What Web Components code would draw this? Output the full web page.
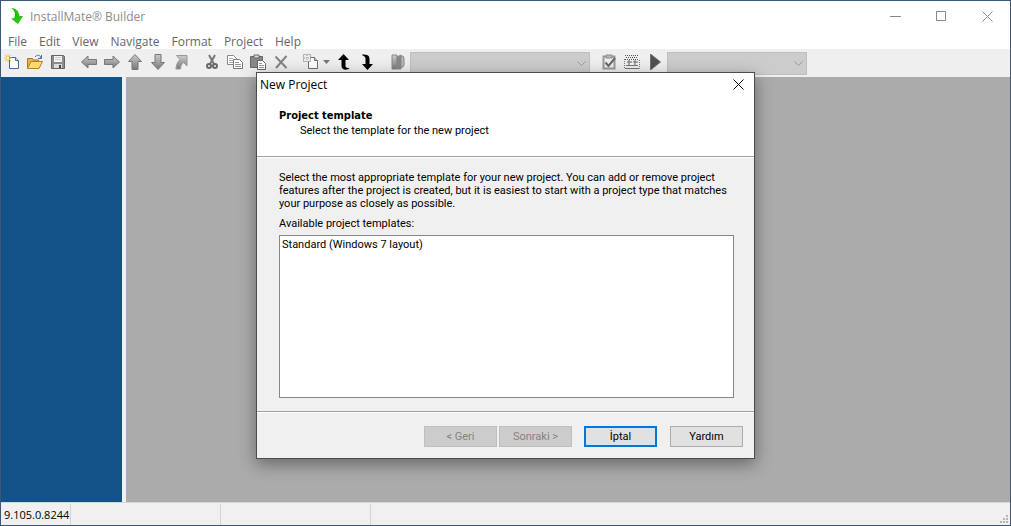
<!DOCTYPE html>
<html lang="en">
<head>
<meta charset="utf-8">
<title>InstallMate Builder</title>
<style>
    html, body { height: 100%; margin: 0; }
    body {
        font-family: "Open Sans", "Noto Sans", sans-serif;
        font-size: 12px;
        color: #000;
        overflow: hidden;
    }
</style>
</head>
<body>
<app-window>
    <title-bar slot="title">InstallMate® Builder</title-bar>
    <menu-bar slot="menu" items="File,Edit,View,Navigate,Format,Project,Help"></menu-bar>
    <tool-bar slot="tools"></tool-bar>
    <wizard-dialog slot="dialog" caption="New Project">
        <span slot="heading">Project template</span>
        <span slot="sub">Select the template for the new project</span>
        <span slot="intro">Select the most appropriate template for your new project. You can add or remove project<br>features after the project is created, but it is easiest to start with a project type that matches<br>your purpose as closely as possible.</span>
    </wizard-dialog>
    <status-bar slot="status">9.105.0.8244</status-bar>
</app-window>

<script>
class AppWindow extends HTMLElement {
    constructor() {
        super();
        this.attachShadow({ mode: 'open' });
    }

    connectedCallback() {
        this.shadowRoot.innerHTML = `
            <style>
                :host {
                    display: flex;
                    flex-direction: column;
                    position: relative;
                    box-sizing: border-box;
                    height: 100%;
                    border: 1px solid #3a5878;
                    background: #fff;
                }
                .workspace { flex: 1; display: flex; background: #ababab; }
                .side {
                    width: 121px;
                    background: #125286;
                    border-right: 4px solid #f0f0f0;
                }
                /* the modal layer lies over the whole window */
                .modal {
                    position: absolute;
                    inset: 0;
                    display: grid;
                    place-items: center;
                    padding-top: 4px;
                    box-sizing: border-box;
                }
            </style>
            <slot name="title"></slot>
            <slot name="menu"></slot>
            <slot name="tools"></slot>
            <main class="workspace"><aside class="side"></aside></main>
            <slot name="status"></slot>
            <div class="modal"><slot name="dialog"></slot></div>
        `;
    }
}

class TitleBar extends HTMLElement {
    constructor() {
        super();
        this.attachShadow({ mode: 'open' });
    }

    connectedCallback() {
        this.shadowRoot.innerHTML = `
            <style>
                :host { display: flex; height: 30px; color: #8c8c8c; align-items: center; }
                .logo { width: 16px; height: 16px; margin: 0 6px 0 7px; }
                .name { flex: 1; }
                button {
                    width: 46px;
                    height: 28px;
                    padding: 0;
                    border: 0;
                    background: none;
                    display: grid;
                    place-items: center;
                }
                svg { display: block; }
            </style>
            <svg class="logo" viewBox="0 0 16 16">
                <path d="M3 0c5 0 8 3 8.500 8H15l-5 8-7-5.500 3.500-.5C8 6 7 2 3 0z" fill="#2bc312"/>
                <path d="M3 0c4 1 6 4 5.500 9.500L6.500 10C8 6 7 2 3 0z" fill="#1fae0c"/>
            </svg>
            <span class="name"><slot></slot></span>
            <button aria-label="Minimize"><svg width="11" height="11"><path d="M0 5.500h11" stroke="#888"/></svg></button>
            <button aria-label="Maximize"><svg width="11" height="11"><path d="M.5.5h9v9h-9z" fill="none" stroke="#888"/></svg></button>
            <button aria-label="Close"><svg width="11" height="11"><path d="M.5.5l10 10M10.500.5l-10 10" stroke="#888"/></svg></button>
        `;
    }
}

class MenuBar extends HTMLElement {
    constructor() {
        super();
        this.attachShadow({ mode: 'open' });
    }

    connectedCallback() {
        const items = this.getAttribute('items').split(',');
        this.shadowRoot.innerHTML = `
            <style>
                :host { display: flex; height: 16px; padding: 2px 0 0 7px; gap: 12px; align-items: center; }
                button {
                    padding: 0;
                    border: 0;
                    background: none;
                    font: inherit;
                    color: #666;
                }
            </style>
            ${items.map((item) => `<button>${item}</button>`).join('')}
        `;
    }
}

const icons = {
    'New': '<path d="M5.500 3.500h6l3 3v8h-9z" fill="#fff" stroke="#456a9c"/><path d="M11.500 3.500v3h3" fill="#cfdcf0" stroke="#456a9c"/><path d="M4 0v8M0 4h8M1 1l6 6M7 1L1 7" stroke="#f0bd36"/><path d="M3 3h2v2H3z" fill="#fff6b8"/>',
    'Open': '<path d="M.5 14V4.500h5l1 1.500h5v2" fill="#e9b449" stroke="#a8781e"/><path d="M.5 14.500L4 7.500h11.500l-3.500 7z" fill="#ffd878" stroke="#b5811f"/><path d="M8 3c2-2.500 5-2.500 6 1M14.500 1v3.500H11" fill="none" stroke="#47699b"/>',
    'Save': '<path d="M1.500 1.500h12l1 1v12h-13z" fill="#8c8c8c" stroke="#666"/><path d="M4 2h8v6H4z" fill="#f4f4f4"/><path d="M5 3.500h6M5 5.500h6" stroke="#ccc"/><path d="M4 10h8v4H4z" fill="#ddd"/><path d="M9 11h2v3H9z" fill="#444"/>',
    'Back': '<path d="M.5 8L7 2v3.500h8.500v5H7V14z" fill="url(#g)" stroke="#777"/>',
    'Forward': '<path d="M15.500 8L9 2v3.500H.5v5H9V14z" fill="url(#g)" stroke="#777"/>',
    'Up': '<path d="M8 .5L14.500 7.500H11v8H5v-8H1.500z" fill="url(#g)" stroke="#777"/>',
    'Down': '<path d="M8 15.500L1.500 8.500H5v-8h6v8h3.500z" fill="url(#g)" stroke="#777"/>',
    'Go to': '<path d="M3.500 1.500h10.500V12l-3.500-3.500c-2 2-3 3.500-3 6.500H3c0-4 1.500-7 4-9.500z" fill="url(#g)" stroke="#999"/>',
    'Cut': '<path d="M5 1l5 9M11 1L6 10" stroke="#777" stroke-width="2"/><circle cx="5" cy="12" r="2" fill="none" stroke="#666" stroke-width="2"/><circle cx="11" cy="12" r="2" fill="none" stroke="#666" stroke-width="2"/>',
    'Copy': '<path d="M.5 1.500h6l3 3v6h-9z" fill="#fff" stroke="#888"/><path d="M2 4.500h4M2 6.500h5M2 8.500h4" stroke="#aaa"/><path d="M6.500 5.500h6l3 3v6h-9z" fill="#fff" stroke="#777"/><path d="M8 8.500h4M8 10.500h6M8 12.500h6" stroke="#999"/>',
    'Paste': '<path d="M.5 2.500h12v11H.5z" fill="#888" stroke="#666"/><path d="M4 1h5v3H4z" fill="#ddd" stroke="#666"/><path d="M7.500 6.500h5l3 3v6h-8z" fill="#fff" stroke="#666"/><path d="M9 9.500h3M9 11.500h5M9 13.500h5" stroke="#999"/>',
    'Delete': '<path d="M2.500 2.500l11 11.500M13.500 2L3 14" stroke="#858585" stroke-width="2"/>',
    'Insert': '<path d="M5.500 3.500h6l3 3v8h-9z" fill="#fff" stroke="#707070"/><path d="M11.500 3.500v3h3" fill="#ccc" stroke="#707070"/><path d="M.5.500h7v7h-7z" fill="#eee" stroke="#777" stroke-dasharray="1 1"/><path d="M4 1v6M1 4h6" stroke="#999" stroke-dasharray="1 1"/>',
    'Move up': '<path d="M7.500 0L13 6H9.500v6c0 1.500 1 2 4 2-1 2-8 3-8-2V6H2z" fill="#000"/>',
    'Move down': '<path d="M8.500 16L14 10h-3.500V5c0-4-3-4.500-7.500-4.500C3 2 6.500 1.500 6.500 5v5H3z" fill="#000"/>',
    'Exit': '<path d="M2 1h5v14H2z" fill="url(#g)" stroke="#888"/><path d="M7 3l4-2v14H7z" fill="#888" stroke="#888"/><path d="M11 2h2l1 2v7l-1 2h-2z" fill="#bbb" stroke="#888"/>',
    'Check': '<path d="M2.500 2.500h11v12h-11z" fill="#eee" stroke="#999" stroke-width="2"/><path d="M5 1h6v3H5z" fill="#bbb" stroke="#888"/><path d="M4.500 8.500l3 3.500 6.500-8" fill="none" stroke="#666" stroke-width="2"/>',
    'Build': '<path d="M1 1.500h14M2 3.500h12M1 5.500h14" stroke="#555" stroke-dasharray="1 1"/><path d="M.5 5v9.500h15V5" fill="none" stroke="#777" stroke-dasharray="1 1"/><path d="M5 6v5M3 8h5M11 6v5M9 8h5" stroke="#666"/><path d="M2 11.500h12M1 14.500h14" stroke="#777"/>',
    'Run': '<path d="M3.500 0v16l10-8z" fill="#505050" stroke="#707070"/>',
};

class ToolBar extends HTMLElement {
    constructor() {
        super();
        this.attachShadow({ mode: 'open' });
    }

    group(...names) {
        const buttons = names.map((name) => `<button aria-label="${name}">${this.icon(name)}</button>`);
        return `<div class="group">${buttons.join('')}</div>`;
    }

    icon(name) {
        return `
            <svg width="16" height="16" viewBox="0 0 16 16">
                <defs><linearGradient id="g" x2="0" y2="1"><stop stop-color="#ccc"/><stop offset="1" stop-color="#787878"/></linearGradient></defs>
                ${icons[name]}
            </svg>`;
    }

    connectedCallback() {
        this.shadowRoot.innerHTML = `
            <style>
                :host {
                    display: flex;
                    height: 28px;
                    gap: 8px;
                    align-items: flex-start;
                    background: #efefef;
                }
                .group { display: flex; }
                button {
                    box-sizing: border-box;
                    width: 23px;
                    height: 26px;
                    padding: 0 2px 0 0;
                    border: 0;
                    background: none;
                    display: flex;
                    justify-content: center;
                    align-items: center;
                }
                .split { width: 32px; gap: 4px; }
                .tail { display: flex; }
                .combo { display: grid; width: 180px; height: 23px; margin-top: 3px; }
                .combo.narrow { width: 140px; margin-left: -8px; }
                .combo > * { grid-area: 1 / 1; }
                .combo svg { place-self: center end; margin-right: 4px; }
                select {
                    appearance: none;
                    width: 100%;
                    border: 1px solid #bfbfbf;
                    border-radius: 0;
                    background: #ccc;
                    opacity: 1;
                }
            </style>
            ${this.group('New', 'Open', 'Save')}
            ${this.group('Back', 'Forward', 'Up', 'Down', 'Go to')}
            ${this.group('Cut', 'Copy', 'Paste', 'Delete')}
            <div class="group">
                <button class="split" aria-label="Insert">
                    ${this.icon('Insert')}
                    <svg width="7" height="4"><path d="M0 0h7L3.500 4z" fill="#777"/></svg>
                </button>
                ${this.group('Move up', 'Move down')}
            </div>
            <div class="tail">
                ${this.group('Exit')}
                ${this.combo('Component', '')}
            </div>
            ${this.group('Check', 'Build', 'Run')}
            ${this.combo('Configuration', 'narrow')}
        `;
    }

    combo(label, kind) {
        return `
            <div class="combo ${kind}">
                <select disabled aria-label="${label}"></select>
                <svg width="9" height="6"><path d="M.5.5l4 4 4-4" fill="none" stroke="#999"/></svg>
            </div>`;
    }
}

class StatusBar extends HTMLElement {
    constructor() {
        super();
        this.attachShadow({ mode: 'open' });
    }

    connectedCallback() {
        this.shadowRoot.innerHTML = `
            <style>
                :host {
                    display: flex;
                    height: 21px;
                    padding-top: 1px;
                    border-top: 1px solid #d7d7d7;
                    background: #f0f0f0;
                    font-size: 11px;
                    line-height: 21px;
                }
                div { box-sizing: border-box; width: 150px; border-right: 1px solid #d4d4d4; }
                .version { width: 70px; padding-left: 3px; }
                .rest { flex: 1; border: 0; display: flex; justify-content: flex-end; align-items: flex-end; padding: 2px; }
            </style>
            <div class="version"><slot></slot></div>
            <div></div>
            <div></div>
            <div class="rest">
                <svg width="8" height="8"><path d="M6 0h2v2H6zM3 3h2v2H3zM6 3h2v2H6zM0 6h2v2H0zM3 6h2v2H3zM6 6h2v2H6z" fill="#b5b5b5"/></svg>
            </div>
        `;
    }
}

class WizardDialog extends HTMLElement {
    constructor() {
        super();
        this.attachShadow({ mode: 'open' });
    }

    connectedCallback() {
        this.shadowRoot.innerHTML = `
            <style>
                :host {
                    display: block;
                    width: 497px;
                    border: 1px solid #4c4c4c;
                    background: #f0f0f0;
                    box-shadow: 0 5px 16px rgba(0, 0, 0, .4);
                    font-family: Roboto, "DejaVu Sans Condensed", sans-serif;
                    font-size: 11px;
                    line-height: 13px;
                    white-space: nowrap;
                }
                header { background: #fff; height: 83px; border-bottom: 1px solid #a0a0a0; }
                .caption {
                    display: flex;
                    justify-content: space-between;
                    align-items: center;
                    height: 24px;
                    padding: 0 10px 0 3px;
                    font-family: "Open Sans", sans-serif;
                    font-size: 12px;
                }
                .close { display: flex; padding: 0; border: 0; background: none; }
                h1 {
                    margin: 12px 0 0 22px;
                    font-family: "DejaVu Sans Condensed", sans-serif;
                    font-size: 11px;
                    line-height: 13px;
                }
                .sub { margin: 2px 0 0 43px; }
                .body { padding: 13px 20px 13px 22px; border-top: 1px solid #fff; }
                p { margin: 0; }
                label { display: block; margin: 7px 0 5px; }
                select {
                    display: block;
                    box-sizing: border-box;
                    width: 100%;
                    height: 163px;
                    padding: 0;
                    border: 1px solid #828790;
                    border-radius: 0;
                    background: #fff;
                    font: inherit;
                    color: #000;
                    overflow: hidden;
                    outline: 0;
                }
                option { padding: 2px; min-height: 13px; }
                footer {
                    display: flex;
                    justify-content: flex-end;
                    gap: 2px;
                    padding: 14px 11px 11px;
                    border-top: 1px solid #a0a0a0;
                    box-shadow: inset 0 1px #fff;
                }
                footer button {
                    box-sizing: border-box;
                    width: 73px;
                    height: 21px;
                    padding: 0;
                    border: 1px solid #adadad;
                    background: #e1e1e1;
                    font: inherit;
                    color: #000;
                }
                footer button:disabled { background: #ccc; border-color: #bfbfbf; color: #838383; }
                footer .cancel { margin: 0 11px 0 10px; border: 2px solid #0078d7; }
            </style>
            <header>
                <div class="caption">
                    <span>${this.getAttribute('caption')}</span>
                    <button class="close" aria-label="Close"><svg width="11" height="11"><path d="M.5.5l10 10M10.500.5l-10 10" stroke="#000"/></svg></button>
                </div>
                <h1><slot name="heading"></slot></h1>
                <div class="sub"><slot name="sub"></slot></div>
            </header>
            <div class="body">
                <p><slot name="intro"></slot></p>
                <label for="templates">Available project templates:</label>
                <select id="templates" size="12">
                    <option>Standard (Windows 7 layout)</option>
                </select>
            </div>
            <footer>
                <button disabled>&lt; Geri</button>
                <button disabled>Sonraki &gt;</button>
                <button class="cancel">İptal</button>
                <button>Yardım</button>
            </footer>
        `;
    }
}

customElements.define('app-window', AppWindow);
customElements.define('title-bar', TitleBar);
customElements.define('menu-bar', MenuBar);
customElements.define('tool-bar', ToolBar);
customElements.define('status-bar', StatusBar);
customElements.define('wizard-dialog', WizardDialog);
</script>
</body>
</html>
